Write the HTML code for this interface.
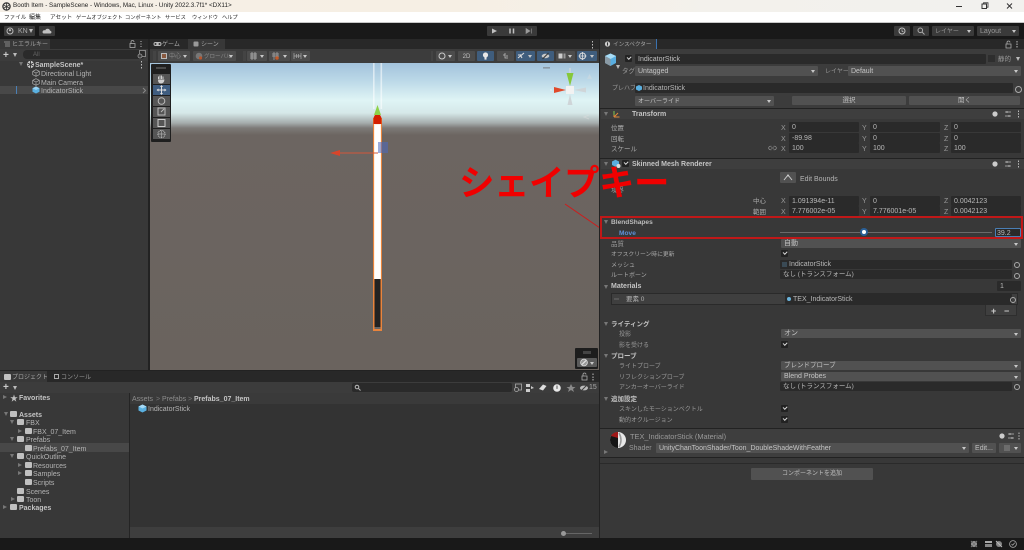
<!DOCTYPE html>
<html><head><meta charset="utf-8">
<style>
html,body{margin:0;padding:0;background:#383838;}
#r{position:relative;width:1024px;height:550px;overflow:hidden;background:#383838;font-family:"Liberation Sans","Noto Sans CJK JP",sans-serif;font-size:7px;color:#b4b4b4;filter:blur(.35px);}
#r div,#r span,#r svg{position:absolute;}
.t{white-space:nowrap;line-height:10px;height:10px;margin-top:1.5px;}
.b{font-weight:bold;color:#c4c4c4;}
.f{background:#2a2a2a;border-radius:1px;line-height:10px;padding-left:3px;padding-top:1px;box-sizing:border-box;white-space:nowrap;color:#b8b8b8;}
.d{background:#515151;border-radius:1px;line-height:10px;padding-left:3px;padding-top:1px;box-sizing:border-box;white-space:nowrap;color:#c4c4c4;}
.d:after{content:"";position:absolute;right:3px;top:4px;border:2px solid transparent;border-top:3px solid #c8c8c8;border-bottom:0;}
.n{background:#515151;border-radius:1px;line-height:10px;padding-top:1px;box-sizing:border-box;text-align:center;color:#c0c0c0;}
.c{width:7px;height:7px;background:#222;border-radius:1px;}
.c:after{content:"";position:absolute;left:1.5px;top:1px;width:3px;height:1.6px;border-left:1px solid #ddd;border-bottom:1px solid #ddd;transform:rotate(-45deg);}
.h{background:#3e3e3e;left:601px;width:423px;}
.a{width:0;height:0;border:2.5px solid transparent;border-top:4px solid #777;border-bottom:0;}
.g{width:0;height:0;border:2.5px solid transparent;border-left:4px solid #777;border-right:0;}
.o{width:5px;height:5px;border:1px solid #aaa;border-radius:50%;box-sizing:content-box;}
.fo{width:7px;height:6px;background:#c0c0c0;border-radius:1px;}
.tb{background:#515151;height:10px;border-radius:1px;}
.tool{left:153px;width:17px;height:10px;background:#555;}
</style></head><body>
<div id="r">

<!-- title bar -->
<div style="left:0;top:0;width:1024px;height:12px;background:linear-gradient(90deg,#f5efe6,#f6efe4 45%,#f3f1ec 70%,#f2f1ee);"></div>
<svg style="left:2px;top:2px" width="9" height="9" viewBox="0 0 9 9"><circle cx="4.5" cy="4.5" r="3.6" fill="none" stroke="#333" stroke-width="1.3"/><path d="M4.5 1.5V7.5M2 3.2L7 6M7 3.2L2 6" stroke="#333" stroke-width=".8"/></svg>
<span class="t" style="left:13px;top:-1px;color:#222;font-size:6.3px;">Booth Item - SampleScene - Windows, Mac, Linux - Unity 2022.3.7f1* &lt;DX11&gt;</span>
<svg style="left:955px;top:1px" width="69" height="10" viewBox="0 0 69 10"><path d="M1 5.5H7" stroke="#333"/><rect x="27" y="3" width="4.5" height="4.5" fill="none" stroke="#333"/><path d="M28.5 3V1.8H33V6.2H31.5" fill="none" stroke="#333" stroke-width=".8"/><path d="M52 2.5L57 7.5M57 2.5L52 7.5" stroke="#333"/></svg>

<!-- menu -->
<div style="left:0;top:12px;width:1024px;height:11px;background:#fff;"></div>
<div style="left:0;top:22px;width:1024px;height:1px;background:#c8c8c8;"></div>
<span class="t" style="left:4px;top:11.5px;color:#222;font-size:5.6px;">ファイル</span>
<span class="t" style="left:29px;top:11.5px;color:#222;font-size:6px;">編集</span>
<span class="t" style="left:50px;top:11.5px;color:#222;font-size:5.6px;">アセット</span>
<span class="t" style="left:76px;top:11.5px;color:#222;font-size:5.2px;">ゲームオブジェクト</span>
<span class="t" style="left:125px;top:11.5px;color:#222;font-size:5.2px;">コンポーネント</span>
<span class="t" style="left:165px;top:11.5px;color:#222;font-size:5.2px;">サービス</span>
<span class="t" style="left:192px;top:11.5px;color:#222;font-size:5.2px;">ウィンドウ</span>
<span class="t" style="left:222px;top:11.5px;color:#222;font-size:5.2px;">ヘルプ</span>

<!-- toolbar -->
<div style="left:0;top:23px;width:1024px;height:16px;background:#191919;"></div>
<div class="tb" style="left:4px;top:26px;width:31px;background:#3a3a3a;"></div>
<svg style="left:6px;top:27px" width="8" height="8"><circle cx="4" cy="4" r="3" fill="none" stroke="#bbb"/><circle cx="4" cy="3.2" r="1.1" fill="#bbb"/></svg>
<span class="t" style="left:18px;top:25px;color:#aaa;">KN</span>
<div class="a" style="left:29px;top:29px;border-top-color:#bbb;"></div>
<div class="tb" style="left:39px;top:26px;width:16px;background:#3a3a3a;"></div>
<svg style="left:42px;top:28px" width="10" height="6"><path d="M1.5 5.5H8.5A1.5 1.5 0 0 0 8 2.6 2.5 2.5 0 0 0 3.2 2.4 1.6 1.6 0 0 0 1.5 5.5Z" fill="#c0c0c0"/></svg>
<div class="tb" style="left:487px;top:26px;width:50px;background:#3a3a3a;"></div>
<svg style="left:487px;top:26px" width="50" height="10"><path d="M5 2.5L10 5 5 7.5Z" fill="#c0c0c0"/><path d="M23 2.5V7.5M26.5 2.5V7.5" stroke="#c0c0c0" stroke-width="1.5"/><path d="M39 2.5L43 5 39 7.5ZM44.5 2.5V7.5" fill="#9a9a9a" stroke="#9a9a9a" stroke-width=".6"/></svg>
<div class="tb" style="left:894px;top:26px;width:16px;background:#3a3a3a;"></div>
<svg style="left:898px;top:27px" width="8" height="8"><circle cx="4" cy="4" r="3" fill="none" stroke="#c0c0c0"/><path d="M4 2.2V4.2L5.5 5" fill="none" stroke="#c0c0c0" stroke-width=".8"/></svg>
<div class="tb" style="left:913px;top:26px;width:16px;background:#3a3a3a;"></div>
<svg style="left:917px;top:27px" width="8" height="8"><circle cx="3.3" cy="3.3" r="2.3" fill="none" stroke="#aaa"/><path d="M5 5L7.5 7.5" stroke="#aaa"/></svg>
<div class="d" style="left:932px;top:26px;width:42px;height:10px;background:#3a3a3a;color:#999;font-size:6px;">レイヤー</div>
<div class="d" style="left:977px;top:26px;width:42px;height:10px;background:#3a3a3a;color:#999;">Layout</div>

<!-- hierarchy -->
<div style="left:0;top:39px;width:148px;height:10px;background:#282828;"></div>
<div style="left:0;top:39px;width:50px;height:10px;background:#383838;"></div>
<svg style="left:4px;top:41px" width="7" height="6"><path d="M0 1H6M1 3H6M1 5H6" stroke="#888"/></svg>
<span class="t" style="left:12px;top:38.5px;color:#a0a0a0;font-size:6px;">ヒエラルキー</span>
<svg style="left:129px;top:40px" width="15" height="8"><rect x="1" y="3.5" width="5" height="4" fill="none" stroke="#aaa" stroke-width=".8"/><path d="M2 3.5V2A1.4 1.4 0 0 1 5 2" fill="none" stroke="#aaa" stroke-width=".8"/><path d="M12 1V2M12 3.5V4.5M12 6V7" stroke="#bbb"/></svg>
<div style="left:0;top:49px;width:148px;height:12px;background:#3c3c3c;"></div>
<span class="t" style="left:3px;top:49px;font-size:10px;color:#ccc;line-height:9px;font-weight:bold;">+</span>
<div class="a" style="left:13px;top:53px;border-top-color:#bbb;"></div>
<div style="left:23px;top:50px;width:122px;height:9px;background:#2a2a2a;border-radius:4px;"></div>
<span class="t" style="left:33px;top:48.5px;color:#666;font-size:6px;">All</span>
<svg style="left:137px;top:50px" width="9" height="9"><rect x="2.5" y=".5" width="6" height="6" fill="none" stroke="#999" stroke-width=".8"/><circle cx="3" cy="6" r="2" fill="#3c3c3c" stroke="#999" stroke-width=".8"/></svg>
<div style="left:148px;top:39px;width:2px;height:332px;background:#222;"></div>
<div style="left:0;top:86px;width:148px;height:8px;background:#484848;"></div>
<div style="left:16px;top:86px;width:1px;height:8px;background:#4a7fb5;"></div>
<div class="a" style="left:19px;top:62px;"></div>
<svg style="left:26px;top:60px" width="9" height="9"><circle cx="4.5" cy="4.5" r="3.6" fill="#ccc"/><path d="M4.5 1V8M1.5 3L7.5 6M7.5 3L1.5 6" stroke="#333" stroke-width=".9"/></svg>
<span class="t b" style="left:35px;top:59px;font-size:7px;">SampleScene*</span>
<svg style="left:140px;top:60px" width="3" height="9"><path d="M1.5 1V2.5M1.5 4V5.5M1.5 7V8.5" stroke="#bbb"/></svg>
<svg style="left:32px;top:69px" width="8" height="8"><path d="M4 .7L7.3 2.3V5.7L4 7.3 .7 5.7V2.3ZM.7 2.3L4 4 7.3 2.3M4 4V7.3" fill="none" stroke="#aaa" stroke-width=".7"/></svg>
<span class="t" style="left:41px;top:68px;">Directional Light</span>
<svg style="left:32px;top:78px" width="8" height="8"><path d="M4 .7L7.3 2.3V5.7L4 7.3 .7 5.7V2.3ZM.7 2.3L4 4 7.3 2.3M4 4V7.3" fill="none" stroke="#aaa" stroke-width=".7"/></svg>
<span class="t" style="left:41px;top:77px;">Main Camera</span>
<svg style="left:32px;top:86px" width="8" height="8"><path d="M4 .5L7.5 2.2V5.8L4 7.5 .5 5.8V2.2Z" fill="#5ab0e0"/><path d="M.5 2.2L4 4 7.5 2.2 4 .5Z" fill="#9ad4f4"/></svg>
<span class="t" style="left:41px;top:85px;">IndicatorStick</span>
<svg style="left:142px;top:87px" width="5" height="7"><path d="M1 1L3.5 3.5 1 6" fill="none" stroke="#888"/></svg>

<!-- scene tabs -->
<div style="left:150px;top:39px;width:450px;height:10px;background:#282828;"></div>
<svg style="left:153px;top:41px" width="9" height="6"><rect x=".5" y="1" width="8" height="4" rx="2" fill="#bbb"/><circle cx="2.5" cy="3" r="1" fill="#333"/><circle cx="6.5" cy="3" r="1" fill="#333"/></svg>
<span class="t" style="left:162px;top:38.5px;color:#aaa;font-size:6px;">ゲーム</span>
<div style="left:188px;top:39px;width:37px;height:10px;background:#383838;"></div>
<svg style="left:193px;top:41px" width="6" height="6"><rect x=".5" y=".5" width="5" height="5" rx="1" fill="#999"/></svg>
<span class="t" style="left:201px;top:38.5px;color:#aaa;font-size:6px;">シーン</span>
<svg style="left:591px;top:40px" width="3" height="9"><path d="M1.5 1V2.5M1.5 4V5.5M1.5 7V8.5" stroke="#bbb"/></svg>
<div style="left:150px;top:49px;width:450px;height:14px;background:#3c3c3c;"></div>
<div style="left:153px;top:51px;width:3px;height:10px;background:#444;"></div>
<div class="d" style="left:158px;top:51px;width:32px;height:10px;color:#8a8a8a;padding-left:11px;background:#4c4c4c;font-size:6px;">中心</div>
<div style="left:161px;top:53px;width:6px;height:6px;background:#8a5a40;border:1px solid #bbb;box-sizing:border-box;"></div>
<div class="d" style="left:193px;top:51px;width:43px;height:10px;color:#8a8a8a;padding-left:11px;background:#4c4c4c;font-size:5.5px;">グローバル</div>
<svg style="left:195px;top:52px" width="8" height="8"><circle cx="4" cy="4" r="3.3" fill="#777"/><circle cx="5.5" cy="6" r="1.6" fill="#b5552e"/></svg>
<div style="left:243px;top:51px;width:3px;height:10px;background:#444;"></div>
<div class="d" style="left:247px;top:51px;width:20px;height:10px;background:#4c4c4c;"></div>
<svg style="left:249px;top:52px" width="9" height="8"><path d="M1 2H8M1 4H8M1 6H8M3 0V8M6 0V8" stroke="#bbb" stroke-width=".7"/></svg>
<div class="d" style="left:269px;top:51px;width:21px;height:10px;background:#4c4c4c;"></div>
<svg style="left:271px;top:52px" width="9" height="8"><path d="M1 2H8M1 4H8M3 0V8M6 0V5" stroke="#aaa" stroke-width=".7"/><circle cx="6" cy="6" r="1.8" fill="#c25a2a"/></svg>
<div class="d" style="left:291px;top:51px;width:19px;height:10px;background:#4c4c4c;"></div>
<svg style="left:293px;top:52px" width="9" height="8"><path d="M1 1V7M8 1V7M1 4H8M3.5 2V6M5.5 2V6" stroke="#aaa" stroke-width=".7"/></svg>
<div style="left:431px;top:51px;width:2px;height:10px;background:#444;"></div>
<div class="d" style="left:436px;top:51px;width:19px;height:10px;background:#4c4c4c;"></div>
<svg style="left:438px;top:52px" width="8" height="8"><circle cx="4" cy="4" r="3" fill="none" stroke="#ccc"/></svg>
<div class="n" style="left:458px;top:51px;width:17px;height:10px;background:#4c4c4c;font-size:6px;">2D</div>
<div class="n" style="left:477px;top:51px;width:17px;height:10px;background:#3f5d7d;"></div>
<svg style="left:481px;top:52px" width="9" height="8"><circle cx="4.5" cy="3" r="2.6" fill="#e8e8e8"/><rect x="3.5" y="5" width="2" height="2.6" fill="#e8e8e8"/></svg>
<div class="n" style="left:497px;top:51px;width:17px;height:10px;background:#4c4c4c;"></div>
<svg style="left:501px;top:52px" width="9" height="8"><path d="M4 1V6H7M2 3H4M6 3V5" stroke="#bbb" stroke-width=".8" fill="none"/></svg>
<div class="d" style="left:516px;top:51px;width:19px;height:10px;background:#3f5d7d;"></div>
<svg style="left:517px;top:52px" width="9" height="8"><path d="M1 6L7 1M3 2.5L5 6M1 3H4" stroke="#ddd" stroke-width="1.1"/></svg>
<div class="n" style="left:537px;top:51px;width:17px;height:10px;background:#3f5d7d;"></div>
<svg style="left:541px;top:52px" width="9" height="8"><ellipse cx="4.5" cy="4" rx="3.8" ry="2.2" fill="#c8c8c8"/><path d="M1.5 7L7.5 1" stroke="#333"/></svg>
<div class="d" style="left:556px;top:51px;width:19px;height:10px;background:#4c4c4c;"></div>
<svg style="left:558px;top:53px" width="8" height="6"><rect x=".5" y=".5" width="4" height="5" fill="#ccc"/><rect x="5.5" y=".5" width="2" height="5" fill="#999"/></svg>
<div class="d" style="left:577px;top:51px;width:20px;height:10px;background:#3f5d7d;"></div>
<svg style="left:578px;top:52px" width="9" height="8"><circle cx="4.5" cy="4" r="3" fill="none" stroke="#e0e0e0"/><path d="M4.5 0V8M0.5 4H8.5" stroke="#e0e0e0" stroke-width=".8"/></svg>

<!-- scene view -->
<div style="left:150px;top:63px;width:449px;height:307px;background:linear-gradient(180deg,#a3c3dc 0,#bcd9e8 18px,#dff4f5 37px,#d5e8e8 50px,#a5acac 60px,#7d7a78 65px,#6c6561 72px,#6a635e 100%);"></div>
<div style="left:599px;top:39px;width:1px;height:511px;background:#222;"></div>
<svg style="left:150px;top:63px" width="449" height="307" viewBox="150 63 449 307">
 <rect x="373" y="63" width="1.6" height="46" fill="#fff" fill-opacity=".55"/>
 <rect x="380.5" y="63" width="1.6" height="46" fill="#fff" fill-opacity=".55"/>
 <rect x="373" y="118" width="9" height="213" fill="#e9843c"/>
 <rect x="374" y="122" width="7" height="157" fill="#fff0e2"/>
 <rect x="375" y="125" width="5" height="154" fill="#fff"/>
 <rect x="374.5" y="279" width="6" height="50" fill="#222"/>
 <rect x="374.5" y="327" width="6" height="2" fill="#666"/>
 <path d="M373.5 124V118Q377.5 108 381.5 118V124Z" fill="#d41f00"/>
 <path d="M377.5 105L381 115H374Z" fill="#8ed248"/>
 <rect x="378" y="142" width="10" height="11" fill="#4d6ac0" fill-opacity=".55"/>
 <path d="M338 153H378" stroke="#d2583a" stroke-width="1"/>
 <path d="M330 153L340 150V156Z" fill="#d8452a"/>
 <!-- gizmo -->
 <rect x="566" y="86" width="8" height="8" fill="#f2f2f2"/>
 <path d="M570 86L566.5 73H573.5Z" fill="#86c83a"/>
 <path d="M570 73V68" stroke="#ddd" stroke-width="1"/>
 <path d="M566 90L554 87V93Z" fill="#e0492a"/>
 <path d="M574 90L586 87.5V92.5Z" fill="#cfd5d8"/>
 <path d="M570 94L567.5 105H572.5Z" fill="#cfd5d8"/>
 <path d="M552 90H550" stroke="#eee"/>
 <path d="M589 115L584 117L589 119" fill="none" stroke="#ddd" stroke-opacity=".5"/>
 <rect x="543" y="67" width="7" height="1.6" fill="#8a99a5"/>
 <path d="M587 79L589.5 74L592 79Z" fill="#c5d8e2"/>
 <!-- annotation -->
 <path d="M565 204L600 228" stroke="#d01a1a" stroke-width="1"/>
</svg>
<span class="t" style="left:459px;top:160px;height:42px;line-height:42px;font-size:35.5px;font-weight:bold;color:#f00000;letter-spacing:-.5px;z-index:5;">シェイプキー</span>

<!-- tools panel -->
<div style="left:151px;top:64px;width:20px;height:78px;background:#1f1f1f;border-radius:1px;"></div>
<div style="left:156px;top:67px;width:10px;height:2px;background:#4a4a4a;"></div>
<div class="tool" style="top:74px;"></div>
<div class="tool" style="top:85px;background:#3f5d80;"></div>
<div class="tool" style="top:96px;"></div>
<div class="tool" style="top:107px;"></div>
<div class="tool" style="top:118px;"></div>
<div class="tool" style="top:129px;"></div>
<svg style="left:153px;top:74px" width="17" height="66" viewBox="0 0 17 66">
 <path d="M5.5 5V2.5M7 5V1.5M8.5 5V1.5M10 5V2.5M5.5 5.5Q5.5 9 8 9T11 5.5" fill="#d0d0d0" stroke="#d0d0d0"/>
 <path d="M8.5 12V20M4.5 16H12.5" stroke="#e0e0e0" stroke-width="1"/>
 <path d="M8.5 11L7 13H10ZM8.5 21L7 19H10ZM3.5 16L5.5 14.5V17.5ZM13.5 16L11.5 14.5V17.5Z" fill="#e0e0e0"/>
 <circle cx="8.5" cy="27" r="3.3" fill="none" stroke="#bbb"/>
 <rect x="5" y="34" width="7" height="7" fill="none" stroke="#bbb"/><path d="M8 38L11 35" stroke="#bbb"/>
 <rect x="5" y="45.5" width="7" height="7" fill="none" stroke="#ccc"/>
 <circle cx="8.5" cy="60" r="3.6" fill="none" stroke="#bbb" stroke-dasharray="1 .7"/><path d="M5 60H12M8.5 56.5V63.5" stroke="#aaa" stroke-width=".7"/>
</svg>

<!-- orientation overlay -->
<div style="left:575px;top:348px;width:23px;height:21px;background:#1d1d1d;border-radius:1px;"></div>
<div style="left:583px;top:351px;width:8px;height:3px;background:#444;"></div>
<div class="d" style="left:577px;top:358px;width:20px;height:9px;background:#5a5a5a;"></div>
<svg style="left:579px;top:358px" width="10" height="9"><circle cx="5" cy="4.5" r="3.4" fill="#9a9a9a" stroke="#ddd" stroke-width=".8"/><path d="M3 6.5L7 2.5" stroke="#eee"/></svg>

<!-- project -->
<div style="left:0;top:370px;width:600px;height:1px;background:#222;"></div>
<div style="left:0;top:371px;width:599px;height:11px;background:#282828;"></div>
<div style="left:0;top:371px;width:47px;height:11px;background:#383838;"></div>
<div class="fo" style="left:4px;top:374px;"></div>
<span class="t" style="left:12px;top:371px;color:#a8a8a8;font-size:6px;">プロジェクト</span>
<div style="left:54px;top:374px;width:5px;height:5px;border:1px solid #aaa;box-sizing:border-box;"></div>
<span class="t" style="left:61px;top:371px;color:#999;font-size:6px;">コンソール</span>
<svg style="left:581px;top:372px" width="15" height="9"><rect x="1" y="4" width="5" height="4" fill="none" stroke="#aaa" stroke-width=".8"/><path d="M2 4V2.5A1.4 1.4 0 0 1 5 2.5" fill="none" stroke="#aaa" stroke-width=".8"/><path d="M12 1.5V3M12 4.5V6M12 7V8.5" stroke="#bbb"/></svg>
<div style="left:0;top:382px;width:599px;height:11px;background:#3c3c3c;"></div>
<span class="t" style="left:3px;top:381px;font-size:10px;color:#ccc;line-height:10px;font-weight:bold;">+</span>
<div class="a" style="left:13px;top:386px;border-top-color:#bbb;"></div>
<div style="left:352px;top:383px;width:160px;height:9px;background:#2a2a2a;border-radius:2px;"></div>
<svg style="left:354px;top:384px" width="7" height="7"><circle cx="3" cy="3" r="1.8" fill="none" stroke="#bbb"/><path d="M4.5 4.5L6.5 6.5" stroke="#bbb"/></svg>
<svg style="left:513px;top:382px" width="86" height="11" viewBox="0 0 86 11">
 <rect x="2.5" y="2" width="6" height="6" fill="none" stroke="#aaa" stroke-width=".8"/><circle cx="3.5" cy="7.5" r="2" fill="#3c3c3c" stroke="#aaa" stroke-width=".8"/>
 <rect x="13" y="2" width="4" height="3" fill="#ccc"/><rect x="13" y="7" width="4" height="3" fill="#ccc"/><path d="M18 4L21 6 18 7Z" fill="#ccc"/>
 <path d="M26 7L30 2.5L33.5 4L30 8.5Z" fill="#ddd"/>
 <circle cx="44" cy="6" r="3.8" fill="#e8e8e8"/><rect x="43.5" y="3.5" width="1" height="3.4" fill="#555"/>
 <path d="M58 2L59.5 5H62.5L60 7L61 10L58 8L55 10L56 7L53.5 5H56.5Z" fill="#8a8a8a"/>
 <ellipse cx="71" cy="6" rx="4" ry="2.4" fill="#bbb"/><path d="M68 9L74 3" stroke="#3c3c3c"/>
</svg>
<span class="t" style="left:589px;top:381px;color:#aaa;font-size:7px;">15</span>
<div style="left:129px;top:393px;width:1px;height:145px;background:#242424;"></div>
<div style="left:0;top:393px;width:129px;height:145px;background:#383838;"></div>
<div style="left:130px;top:393px;width:469px;height:11px;background:#3a3a3a;"></div>
<div style="left:130px;top:404px;width:469px;height:123px;background:#333;"></div>
<div style="left:130px;top:527px;width:469px;height:11px;background:#3e3e3e;"></div>
<div style="left:562px;top:533px;width:30px;height:1px;background:#666;"></div>
<div style="left:561px;top:531px;width:5px;height:5px;background:#999;border-radius:50%;"></div>
<span class="t" style="left:132px;top:393px;color:#8d8d8d;">Assets</span>
<span class="t" style="left:156px;top:393px;color:#777;">&gt;</span>
<span class="t" style="left:162px;top:393px;color:#8d8d8d;">Prefabs</span>
<span class="t" style="left:188px;top:393px;color:#777;">&gt;</span>
<span class="t b" style="left:194px;top:393px;">Prefabs_07_Item</span>
<svg style="left:138px;top:404px" width="9" height="9"><path d="M4.5 .5L8.5 2.5V6.5L4.5 8.5 .5 6.5V2.5Z" fill="#5ab0e0"/><path d="M.5 2.5L4.5 4.5 8.5 2.5 4.5 .5Z" fill="#a5d9f5"/></svg>
<span class="t" style="left:148px;top:403px;">IndicatorStick</span>

<div style="left:0;top:443px;width:129px;height:9px;background:#484848;"></div>
<div class="g" style="left:3px;top:395px;"></div>
<span class="t" style="left:10px;top:392px;color:#c0c0c0;font-size:8px;">★</span>
<span class="t b" style="left:19px;top:392px;">Favorites</span>
<div class="a" style="left:4px;top:412px;"></div>
<div class="fo" style="left:10px;top:411px;"></div>
<span class="t b" style="left:19px;top:409px;">Assets</span>
<div class="a" style="left:10px;top:420px;"></div><div class="fo" style="left:17px;top:419px;"></div>
<span class="t" style="left:26px;top:417px;">FBX</span>
<div class="g" style="left:18px;top:429px;"></div><div class="fo" style="left:25px;top:428px;"></div>
<span class="t" style="left:33px;top:426px;">FBX_07_Item</span>
<div class="a" style="left:10px;top:437px;"></div><div class="fo" style="left:17px;top:436px;"></div>
<span class="t" style="left:26px;top:434px;">Prefabs</span>
<div class="fo" style="left:25px;top:445px;"></div>
<span class="t" style="left:33px;top:443px;">Prefabs_07_Item</span>
<div class="a" style="left:10px;top:454px;"></div><div class="fo" style="left:17px;top:453px;"></div>
<span class="t" style="left:26px;top:451px;">QuickOutline</span>
<div class="g" style="left:18px;top:463px;"></div><div class="fo" style="left:25px;top:462px;"></div>
<span class="t" style="left:33px;top:460px;">Resources</span>
<div class="g" style="left:18px;top:471px;"></div><div class="fo" style="left:25px;top:470px;"></div>
<span class="t" style="left:33px;top:468px;">Samples</span>
<div class="fo" style="left:25px;top:479px;"></div>
<span class="t" style="left:33px;top:477px;">Scripts</span>
<div class="fo" style="left:17px;top:488px;"></div>
<span class="t" style="left:26px;top:486px;">Scenes</span>
<div class="g" style="left:11px;top:497px;"></div><div class="fo" style="left:17px;top:496px;"></div>
<span class="t" style="left:26px;top:494px;">Toon</span>
<div class="g" style="left:3px;top:505px;"></div><div class="fo" style="left:10px;top:504px;"></div>
<span class="t b" style="left:19px;top:502px;">Packages</span>

<!-- status bar -->
<div style="left:0;top:538px;width:1024px;height:12px;background:#191919;"></div>
<svg style="left:968px;top:539px" width="54" height="10" viewBox="0 0 54 10">
 <circle cx="6" cy="5" r="3" fill="#999"/><path d="M3 2L9 8M9 2L3 8" stroke="#777"/>
 <rect x="17" y="2" width="7" height="2" fill="#aaa"/><rect x="17" y="5" width="7" height="3" fill="#888"/>
 <circle cx="31" cy="5" r="3" fill="#888"/><path d="M28 2L34 8" stroke="#bbb"/>
 <circle cx="45" cy="5" r="3.4" fill="none" stroke="#aaa" stroke-width=".8"/><path d="M43.5 5L44.7 6.2 46.7 3.8" fill="none" stroke="#aaa" stroke-width=".8"/>
</svg>

<!-- inspector -->
<div style="left:600px;top:39px;width:424px;height:10px;background:#282828;"></div>
<div style="left:600px;top:39px;width:56px;height:10px;background:#383838;"></div>
<svg style="left:604px;top:40px" width="7" height="8"><circle cx="3.5" cy="4" r="2.6" fill="#ccc"/><rect x="3" y="2.4" width="1" height="3.2" fill="#333"/></svg>
<div style="left:656px;top:39px;width:1px;height:10px;background:#3a72b0;"></div>
<span class="t" style="left:613px;top:38.5px;color:#aaa;font-size:5.6px;">インスペクター</span>
<svg style="left:1005px;top:40px" width="15" height="9"><rect x="1" y="4" width="5" height="4" fill="none" stroke="#aaa" stroke-width=".8"/><path d="M2 4V2.5A1.4 1.4 0 0 1 5 2.5" fill="none" stroke="#aaa" stroke-width=".8"/><path d="M12 1V2.5M12 3.5V5M12 6V7.5" stroke="#bbb"/></svg>
<div style="left:600px;top:49px;width:424px;height:59px;background:#3c3c3c;"></div>
<svg style="left:604px;top:53px" width="13" height="14"><path d="M6.5 .5L12 3V10L6.5 13 1 10V3Z" fill="#59aee0"/><path d="M1 3L6.5 6 12 3 6.5 .5Z" fill="#a8dcf5"/><path d="M1 3V10L6.5 13V6Z" fill="#8a9aa5"/></svg>
<div class="a" style="left:616px;top:65px;border-top-color:#bbb;"></div>
<div class="c" style="left:625px;top:55px;"></div>
<div class="f" style="left:635px;top:54px;width:351px;height:10px;color:#c0c0c0;">IndicatorStick</div>
<div style="left:988px;top:55px;width:7px;height:7px;background:#2e2e2e;"></div>
<span class="t" style="left:998px;top:53.5px;color:#999;font-size:6.5px;">静的</span>
<div class="a" style="left:1016px;top:57px;border-top-color:#bbb;"></div>
<span class="t" style="left:622px;top:65.5px;color:#999;font-size:6.5px;">タグ</span>
<div class="d" style="left:635px;top:66px;width:183px;height:10px;">Untagged</div>
<span class="t" style="left:825px;top:65.5px;color:#999;font-size:6px;">レイヤー</span>
<div class="d" style="left:848px;top:66px;width:173px;height:10px;">Default</div>
<span class="t" style="left:612px;top:82.5px;color:#999;font-size:6px;">プレハブ</span>
<div class="f" style="left:635px;top:83px;width:378px;height:10px;padding-left:8px;">IndicatorStick</div>
<svg style="left:636px;top:85px" width="6" height="6"><path d="M3 0L6 1.5V4.5L3 6 0 4.5V1.5Z" fill="#5ab0e0"/></svg>
<div class="o" style="left:1015px;top:86px;"></div>
<div class="d" style="left:635px;top:96px;width:139px;height:10px;font-size:6px;">オーバーライド</div>
<div class="n" style="left:792px;top:96px;width:114px;height:9px;font-size:6.5px;line-height:8px;">選択</div>
<div class="n" style="left:909px;top:96px;width:111px;height:9px;font-size:6.5px;line-height:8px;">開く</div>
<div style="left:600px;top:108px;width:424px;height:1px;background:#222;"></div>

<!-- transform -->
<div class="h" style="top:109px;height:10px;"></div>
<div class="a" style="left:604px;top:112px;"></div>
<svg style="left:612px;top:110px" width="9" height="9"><path d="M2 7H7.5M2 7V1.5M2 7L6 3" stroke="#e08a3a"/><path d="M2 1V5" stroke="#7ec850"/></svg>
<span class="t b" style="left:632px;top:108.5px;">Transform</span>
<svg style="left:991px;top:109px" width="30" height="10"><circle cx="4" cy="5" r="2.6" fill="#ccc"/><path d="M14 3H20M14 7H20M16 2V4M18 6V8" stroke="#bbb" stroke-width=".8"/><path d="M27.5 1.5V3M27.5 4.2V5.7M27.5 7V8.5" stroke="#bbb"/></svg>

<span class="t" style="left:611px;top:122px;color:#aaa;font-size:6.5px;">位置</span>
<span class="t" style="left:611px;top:133px;color:#aaa;font-size:6.5px;">回転</span>
<span class="t" style="left:611px;top:143px;color:#aaa;font-size:6.5px;">スケール</span>
<svg style="left:768px;top:145px" width="9" height="6"><path d="M3.5 1.2H2.5A1.8 1.8 0 0 0 2.5 4.8H3.5M5.5 1.2H6.5A1.8 1.8 0 0 1 6.5 4.8H5.5M3 3H6" fill="none" stroke="#999" stroke-width=".7"/></svg>

<span class="t" style="left:781px;top:122px;color:#999;">X</span><div class="f" style="left:789px;top:122px;width:70px;height:10px;">0</div>
<span class="t" style="left:862px;top:122px;color:#999;">Y</span><div class="f" style="left:870px;top:122px;width:70px;height:10px;">0</div>
<span class="t" style="left:944px;top:122px;color:#999;">Z</span><div class="f" style="left:951px;top:122px;width:70px;height:10px;">0</div>
<span class="t" style="left:781px;top:133px;color:#999;">X</span><div class="f" style="left:789px;top:133px;width:70px;height:10px;">-89.98</div>
<span class="t" style="left:862px;top:133px;color:#999;">Y</span><div class="f" style="left:870px;top:133px;width:70px;height:10px;">0</div>
<span class="t" style="left:944px;top:133px;color:#999;">Z</span><div class="f" style="left:951px;top:133px;width:70px;height:10px;">0</div>
<span class="t" style="left:781px;top:143px;color:#999;">X</span><div class="f" style="left:789px;top:143px;width:70px;height:10px;">100</div>
<span class="t" style="left:862px;top:143px;color:#999;">Y</span><div class="f" style="left:870px;top:143px;width:70px;height:10px;">100</div>
<span class="t" style="left:944px;top:143px;color:#999;">Z</span><div class="f" style="left:951px;top:143px;width:70px;height:10px;">100</div>
<div style="left:600px;top:158px;width:424px;height:1px;background:#222;"></div>

<!-- skinned mesh -->
<div class="h" style="top:159px;height:10px;"></div>
<div class="a" style="left:604px;top:162px;"></div>
<svg style="left:612px;top:159px" width="9" height="10"><path d="M3.5 .8L7 2.5V6L3.5 7.8 0 6V2.5Z" fill="#59aee0"/><circle cx="6.5" cy="7" r="2" fill="#ddd"/></svg>
<div class="c" style="left:622px;top:160px;"></div>
<span class="t b" style="left:632px;top:158px;">Skinned Mesh Renderer</span>
<svg style="left:991px;top:159px" width="30" height="10"><circle cx="4" cy="5" r="2.6" fill="#ccc"/><path d="M14 3H20M14 7H20M16 2V4M18 6V8" stroke="#bbb" stroke-width=".8"/><path d="M27.5 1.5V3M27.5 4.2V5.7M27.5 7V8.5" stroke="#bbb"/></svg>
<div class="n" style="left:780px;top:172px;width:16px;height:11px;"></div>
<svg style="left:782px;top:173px" width="12" height="9"><path d="M2 7L6 2 10 7" fill="none" stroke="#ccc"/><circle cx="6" cy="2.5" r="1" fill="#ccc"/></svg>
<span class="t" style="left:800px;top:173px;">Edit Bounds</span>
<span class="t" style="left:611px;top:184px;color:#999;font-size:6.5px;">境界</span>
<span class="t" style="left:753px;top:195px;color:#aaa;font-size:6.5px;">中心</span>
<span class="t" style="left:753px;top:206px;color:#aaa;font-size:6.5px;">範囲</span>
<span class="t" style="left:781px;top:195px;color:#999;">X</span><div class="f" style="left:789px;top:196px;width:70px;height:10px;">1.091394e-11</div>
<span class="t" style="left:862px;top:195px;color:#999;">Y</span><div class="f" style="left:870px;top:196px;width:70px;height:10px;">0</div>
<span class="t" style="left:944px;top:195px;color:#999;">Z</span><div class="f" style="left:951px;top:196px;width:70px;height:10px;">0.0042123</div>
<span class="t" style="left:781px;top:206px;color:#999;">X</span><div class="f" style="left:789px;top:206px;width:70px;height:10px;">7.776002e-05</div>
<span class="t" style="left:862px;top:206px;color:#999;">Y</span><div class="f" style="left:870px;top:206px;width:70px;height:10px;">7.776001e-05</div>
<span class="t" style="left:944px;top:206px;color:#999;">Z</span><div class="f" style="left:951px;top:206px;width:70px;height:10px;">0.0042123</div>

<div style="left:601px;top:227px;width:1px;height:10px;background:#4a7fb5;"></div>
<div class="a" style="left:604px;top:220px;"></div>
<span class="t" style="left:611px;top:216.5px;font-size:6.6px;color:#bbb;font-weight:bold;">BlendShapes</span>
<span class="t" style="left:619px;top:227px;color:#5d8fd8;font-weight:bold;font-size:6.6px;">Move</span>
<div style="left:780px;top:232px;width:212px;height:1px;background:#6a6a6a;"></div>
<div style="left:860px;top:228px;width:8px;height:8px;border-radius:50%;background:#2a5f96;"></div>
<div style="left:862px;top:230px;width:4px;height:4px;border-radius:50%;background:#fff;"></div>
<div class="f" style="left:995px;top:228px;width:26px;height:9px;line-height:7px;border:1px solid #4a7fb5;padding-left:1px;background:#2a2a2a;">39.2</div>
<div style="left:600px;top:216px;width:423px;height:23px;box-sizing:border-box;border:2px solid #c01818;"></div>

<span class="t" style="left:611px;top:238px;color:#999;font-size:6.5px;">品質</span>
<div class="d" style="left:781px;top:239px;width:240px;height:9px;line-height:8px;">自動</div>
<span class="t" style="left:611px;top:248px;color:#aaa;font-size:5.8px;">オフスクリーン時に更新</span>
<div class="c" style="left:781px;top:250px;"></div>
<span class="t" style="left:611px;top:259px;color:#aaa;font-size:6px;">メッシュ</span>
<div class="f" style="left:780px;top:260px;width:232px;height:9px;line-height:8px;padding-left:9px;">IndicatorStick</div>
<div style="left:782px;top:262px;width:5px;height:5px;background:#3a4a55;"></div>
<div class="o" style="left:1014px;top:262px;width:4px;height:4px;"></div>
<span class="t" style="left:611px;top:269px;color:#aaa;font-size:6px;">ルートボーン</span>
<div class="f" style="left:780px;top:270px;width:232px;height:9px;line-height:8px;font-size:6.5px;">なし (トランスフォーム)</div>
<div class="o" style="left:1014px;top:273px;width:4px;height:4px;"></div>
<div class="a" style="left:604px;top:285px;"></div>
<span class="t b" style="left:611px;top:280px;">Materials</span>
<div class="f" style="left:997px;top:281px;width:24px;height:10px;">1</div>
<div style="left:611px;top:293px;width:407px;height:12px;background:#3f3f3f;border:1px solid #2a2a2a;box-sizing:border-box;"></div>
<div style="left:614px;top:298px;width:5px;height:2px;background:#555;"></div>
<span class="t" style="left:626px;top:293.5px;font-size:6.5px;">要素 0</span>
<div class="f" style="left:785px;top:294px;width:227px;height:10px;padding-left:8px;">TEX_IndicatorStick</div>
<div style="left:787px;top:297px;width:4px;height:4px;border-radius:50%;background:#6ab4dc;"></div>
<div class="o" style="left:1010px;top:297px;width:4px;height:4px;"></div>
<div style="left:985px;top:305px;width:32px;height:11px;background:#3f3f3f;border:1px solid #2e2e2e;border-top:0;box-sizing:border-box;"></div>
<span class="t" style="left:991px;top:304px;font-weight:bold;font-size:9px;color:#ccc;">+</span>
<span class="t" style="left:1004px;top:304px;font-weight:bold;font-size:9px;color:#ccc;">−</span>

<div class="a" style="left:604px;top:322px;"></div>
<span class="t b" style="left:611px;top:318px;font-size:6.5px;">ライティング</span>
<span class="t" style="left:619px;top:328px;color:#999;font-size:6px;">投影</span>
<div class="d" style="left:781px;top:329px;width:240px;height:9px;line-height:8px;">オン</div>
<span class="t" style="left:619px;top:339px;color:#999;font-size:6px;">影を受ける</span>
<div class="c" style="left:781px;top:341px;"></div>
<div class="a" style="left:604px;top:354px;"></div>
<span class="t b" style="left:611px;top:350px;font-size:6.5px;">プローブ</span>
<span class="t" style="left:619px;top:360px;color:#999;font-size:6px;">ライトプローブ</span>
<div class="d" style="left:781px;top:361px;width:240px;height:9px;line-height:8px;font-size:6.5px;">ブレンドプローブ</div>
<span class="t" style="left:619px;top:371px;color:#999;font-size:6px;">リフレクションプローブ</span>
<div class="d" style="left:781px;top:372px;width:240px;height:9px;line-height:8px;">Blend Probes</div>
<span class="t" style="left:619px;top:381px;color:#999;font-size:6px;">アンカーオーバーライド</span>
<div class="f" style="left:780px;top:382px;width:232px;height:9px;line-height:8px;font-size:6.5px;">なし (トランスフォーム)</div>
<div class="o" style="left:1014px;top:384px;width:4px;height:4px;"></div>
<div class="a" style="left:604px;top:397px;"></div>
<span class="t b" style="left:611px;top:393px;font-size:6.5px;">追加設定</span>
<span class="t" style="left:619px;top:403px;color:#999;font-size:6px;">スキンしたモーションベクトル</span>
<div class="c" style="left:781px;top:405px;"></div>
<span class="t" style="left:619px;top:414px;color:#999;font-size:6px;">動的オクルージョン</span>
<div class="c" style="left:781px;top:416px;"></div>

<!-- material -->
<div style="left:600px;top:428px;width:424px;height:1px;background:#222;"></div>
<div style="left:600px;top:429px;width:424px;height:28px;background:#3e3e3e;"></div>
<svg style="left:609px;top:431px" width="18" height="18"><circle cx="9" cy="9" r="8" fill="#e8e8e8"/><path d="M9 1A8 8 0 0 0 9 17Z" fill="#151515"/><path d="M9 1A8 8 0 0 0 2 5L9 7Z" fill="#a01818"/><path d="M10 2Q14 9 10 16" stroke="#999" fill="none" stroke-width="1.5"/></svg>
<span class="t" style="left:630px;top:430px;color:#999;font-size:7.4px;">TEX_IndicatorStick (Material)</span>
<svg style="left:998px;top:431px" width="24" height="10"><circle cx="4" cy="5" r="2.6" fill="#ccc"/><path d="M10 3H16M10 7H16M12 2V4M14 6V8" stroke="#bbb" stroke-width=".8"/><path d="M21 1.5V3M21 4.2V5.7M21 7V8.5" stroke="#bbb"/></svg>
<span class="t" style="left:629px;top:442px;color:#999;">Shader</span>
<div class="d" style="left:656px;top:443px;width:313px;height:10px;">UnityChanToonShader/Toon_DoubleShadeWithFeather</div>
<div class="n" style="left:972px;top:443px;width:24px;height:10px;">Edit...</div>
<div class="d" style="left:999px;top:443px;width:22px;height:10px;"></div>
<svg style="left:1003px;top:445px" width="8" height="6"><path d="M1 1H7M1 3H7M1 5H7" stroke="#999" stroke-width=".8"/></svg>
<div class="g" style="left:604px;top:450px;"></div>
<div style="left:600px;top:457px;width:424px;height:1px;background:#222;"></div>
<div style="left:600px;top:463px;width:424px;height:1px;background:#2a2a2a;"></div>
<div class="n" style="left:751px;top:468px;width:122px;height:12px;line-height:11px;font-size:6px;">コンポーネントを追加</div>

</div>
</body></html>
